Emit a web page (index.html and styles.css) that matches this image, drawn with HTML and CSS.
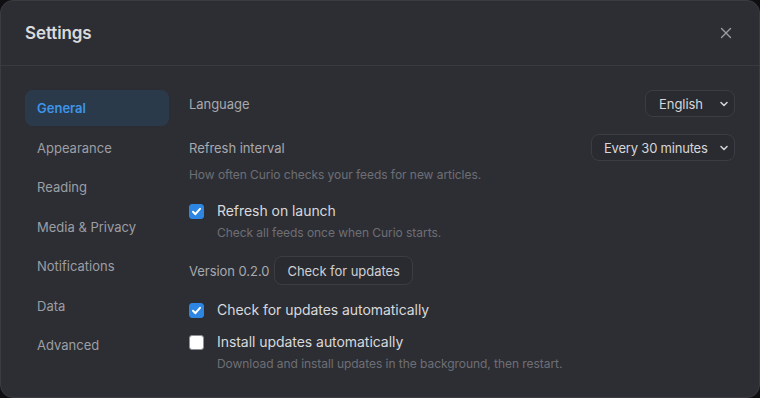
FILE: index.html
```html
<!DOCTYPE html>
<html lang="en">
<head>
    <meta charset="UTF-8">
    <title>Settings</title>
    <link rel="stylesheet" href="styles.css">
</head>
<body>
    <div class="dialog">
        <div class="dialog-header">
            <h1>Settings</h1>
            <button class="close-btn" type="button" aria-label="Close">
                <svg width="12" height="12" viewBox="0 0 12 12"><path d="M1.5 1.5 L10.5 10.5 M10.5 1.5 L1.5 10.5" stroke="#9a9ca3" stroke-width="1.4" stroke-linecap="round"/></svg>
            </button>
        </div>
        <div class="dialog-body">
            <nav class="sidebar">
                <a class="nav-item active">General</a>
                <a class="nav-item">Appearance</a>
                <a class="nav-item">Reading</a>
                <a class="nav-item">Media &amp; Privacy</a>
                <a class="nav-item">Notifications</a>
                <a class="nav-item">Data</a>
                <a class="nav-item">Advanced</a>
            </nav>
            <div class="content">
                <div class="setting-row">
                    <span class="setting-label">Language</span>
                    <div class="select select-lang">English
                        <svg width="10" height="10" viewBox="0 0 10 10"><path d="M2 3.5 L5 6.5 L8 3.5" fill="none" stroke="#d0d1d5" stroke-width="1.6" stroke-linecap="round" stroke-linejoin="round"/></svg>
                    </div>
                </div>
                <div class="setting-row row-gap">
                    <span class="setting-label">Refresh interval</span>
                    <div class="select select-interval">Every 30 minutes
                        <svg width="10" height="10" viewBox="0 0 10 10"><path d="M2 3.5 L5 6.5 L8 3.5" fill="none" stroke="#d0d1d5" stroke-width="1.6" stroke-linecap="round" stroke-linejoin="round"/></svg>
                    </div>
                </div>
                <p class="help">How often Curio checks your feeds for new articles.</p>

                <div class="check-item first-check">
                    <span class="checkbox checked">
                        <svg width="11" height="11" viewBox="0 0 11 11"><path d="M2 5.8 L4.4 8.2 L9 2.8" fill="none" stroke="#fff" stroke-width="2" stroke-linecap="round" stroke-linejoin="round"/></svg>
                    </span>
                    <div>
                        <div class="check-label">Refresh on launch</div>
                        <div class="check-help">Check all feeds once when Curio starts.</div>
                    </div>
                </div>

                <div class="version-row">
                    <span class="setting-label">Version 0.2.0</span>
                    <button class="btn" type="button">Check for updates</button>
                </div>

                <div class="check-item auto-check">
                    <span class="checkbox checked">
                        <svg width="11" height="11" viewBox="0 0 11 11"><path d="M2 5.8 L4.4 8.2 L9 2.8" fill="none" stroke="#fff" stroke-width="2" stroke-linecap="round" stroke-linejoin="round"/></svg>
                    </span>
                    <div>
                        <div class="check-label">Check for updates automatically</div>
                    </div>
                </div>

                <div class="check-item install-check">
                    <span class="checkbox"></span>
                    <div>
                        <div class="check-label">Install updates automatically</div>
                        <div class="check-help">Download and install updates in the background, then restart.</div>
                    </div>
                </div>
            </div>
        </div>
    </div>
</body>
</html>
```

FILE: styles.css
```css
html, body {
    margin: 0;
    padding: 0;
    background-color: #0f0f11;
}
body {
    font-family: Inter, "Noto Sans", sans-serif;
    color: #dcdde0;
    width: 760px;
    height: 398px;
    overflow: hidden;
}
.dialog {
    box-sizing: border-box;
    width: 760px;
    height: 398px;
    background: #2d2e33;
    border: 1px solid #3b3c42;
    border-radius: 13px;
    overflow: hidden;
}
.dialog-header {
    height: 64px;
    border-bottom: 1px solid #3a3b41;
    display: flex;
    align-items: center;
    justify-content: space-between;
    padding: 0 26px 0 24px;
}
.dialog-header h1 {
    margin: 0;
    font-size: 17px;
    font-weight: 600;
    color: #d9dadd;
    letter-spacing: -0.1px;
}
.close-btn {
    background: none;
    border: none;
    padding: 0;
    width: 14px;
    height: 14px;
    display: flex;
    align-items: center;
    justify-content: center;
    cursor: pointer;
}
.dialog-body {
    display: flex;
    gap: 20px;
    padding: 24px 24px 0 24px;
}
.sidebar {
    width: 144px;
    flex-shrink: 0;
    display: flex;
    flex-direction: column;
    gap: 3.5px;
}
.nav-item {
    display: flex;
    align-items: center;
    height: 36px;
    padding: 0 12px;
    border-radius: 8px;
    font-size: 13px;
    color: #9c9ea5;
    cursor: pointer;
}
.nav-item.active {
    background: #2b3a4b;
    color: #3d95ea;
    font-weight: 600;
}
.content {
    flex: 1;
    display: flex;
    flex-direction: column;
    letter-spacing: -0.05px;
}
.setting-row {
    display: flex;
    align-items: center;
    justify-content: space-between;
}
.row-gap {
    margin-top: 17px;
}
.setting-label {
    font-size: 13px;
    color: #a7a9af;
}
.select {
    box-sizing: border-box;
    height: 27px;
    display: flex;
    align-items: center;
    justify-content: space-between;
    padding: 0 5px 0 13px;
    border: 1px solid #3c3d44;
    border-radius: 8px;
    background: #2a2b30;
    font-size: 13px;
    color: #d6d7da;
}
.select-lang {
    width: 90px;
}
.select-interval {
    width: 144px;
    padding-left: 12px;
    letter-spacing: -0.2px;
}
.help {
    margin: 6px 0 0 0;
    font-size: 12px;
    color: #6d6f76;
}
.check-item {
    display: flex;
    gap: 13px;
    align-items: flex-start;
}
.first-check {
    margin-top: 20px;
}
.auto-check {
    margin-top: 16px;
}
.install-check {
    margin-top: 14px;
}
.checkbox {
    box-sizing: border-box;
    width: 15px;
    height: 15px;
    margin-top: 2px;
    border-radius: 3px;
    background: #ffffff;
    border: 1px solid #8f9096;
    display: flex;
    align-items: center;
    justify-content: center;
    flex-shrink: 0;
}
.checkbox.checked {
    background: #2d86e2;
    border-color: #2d86e2;
}
.check-label {
    font-size: 14px;
    color: #d8d9dc;
    line-height: 18px;
}
.check-help {
    font-size: 12px;
    color: #6d6f76;
    margin-top: 5px;
}
.version-row {
    display: flex;
    align-items: center;
    gap: 5px;
    margin-top: 16px;
}
.btn {
    font-family: inherit;
    letter-spacing: inherit;
    height: 29px;
    padding: 0 12px;
    border: 1px solid #3c3d44;
    border-radius: 8px;
    background: #2a2b30;
    font-size: 13px;
    color: #cfd0d4;
    cursor: pointer;
}
```
